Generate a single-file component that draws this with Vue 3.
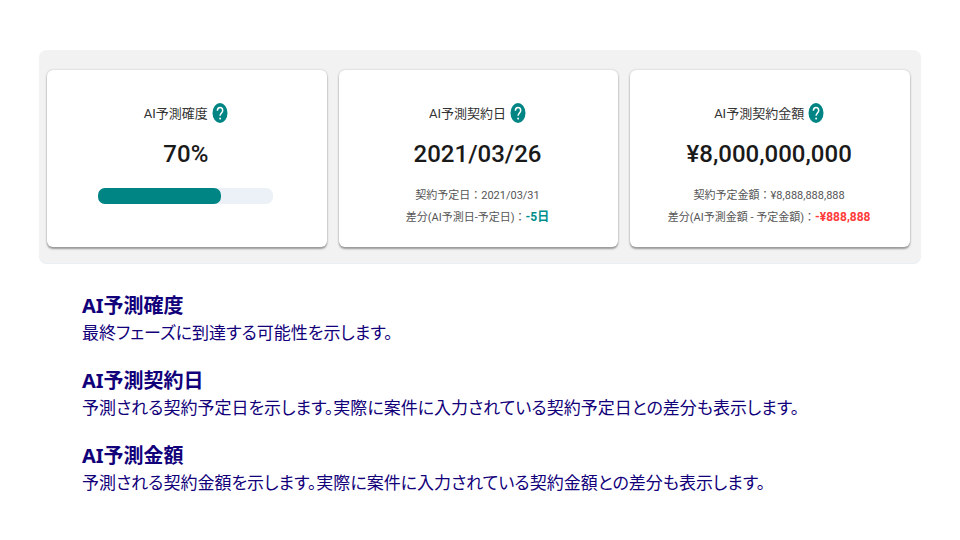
<script setup>
const confidence = 70

const cards = [
  { id: 'confidence', title: 'AI予測確度', value: '70%', progress: confidence },
  {
    id: 'date',
    title: 'AI予測契約日',
    value: '2021/03/26',
    planned: '契約予定日：2021/03/31',
    label: '差分(AI予測日-予定日)：',
    diff: '-5日',
    tone: 'positive',
  },
  {
    id: 'amount',
    title: 'AI予測契約金額',
    value: '¥8,000,000,000',
    planned: '契約予定金額：¥8,888,888,888',
    label: '差分(AI予測金額 - 予定金額)：',
    diff: '-¥888,888',
    tone: 'negative',
  },
]

const notes = [
  { title: 'AI予測確度', text: '最終フェーズに到達する可能性を示します。' },
  {
    title: 'AI予測契約日',
    text: '予測される契約予定日を示します。実際に案件に入力されている契約予定日との差分も表示します。',
  },
  {
    title: 'AI予測金額',
    text: '予測される契約金額を示します。実際に案件に入力されている契約金額との差分も表示します。',
  },
]
</script>

<template>
  <main class="page">
    <section class="panel">
      <article v-for="card in cards" :key="card.id" class="card">
        <div class="head">
          <h2 class="title">{{ card.title }}</h2>
          <button class="help" type="button" :aria-label="card.title">
            <svg viewBox="0 0 16 20" aria-hidden="true">
              <ellipse cx="8" cy="10" rx="7.5" ry="10" fill="#008584" />
              <path
                d="M5.4 7.8C5.4 5.6 6.4 4.4 8 4.4s2.7 1.1 2.7 3c0 2.3-2.6 2.8-2.6 5.3"
                fill="none"
                stroke="#fff"
                stroke-width="1.5"
              />
              <ellipse cx="8.1" cy="15.6" rx="0.9" ry="1.1" fill="#fff" />
            </svg>
          </button>
        </div>
        <p class="value">{{ card.value }}</p>
        <div
          v-if="card.progress"
          class="track"
          role="progressbar"
          :aria-label="card.title"
          :aria-valuenow="card.progress"
          aria-valuemin="0"
          aria-valuemax="100"
        >
          <div class="fill" :style="{ width: card.progress + '%' }"></div>
        </div>
        <div v-else class="details">
          <p>{{ card.planned }}</p>
          <p>{{ card.label }}<strong :class="card.tone">{{ card.diff }}</strong></p>
        </div>
      </article>
    </section>

    <section class="notes">
      <div v-for="note in notes" :key="note.title" class="note">
        <h3>{{ note.title }}</h3>
        <p>{{ note.text }}</p>
      </div>
    </section>
  </main>
</template>

<style>
body {
  margin: 0;
  background: #fff;
}
</style>

<style scoped>
.page {
  padding: 50px 39px 40px;
  font-family: "Noto Sans", "Noto Sans CJK JP", sans-serif;
}

h2,
h3,
p {
  margin: 0;
}

.panel {
  display: grid;
  grid-template-columns: repeat(3, 1fr);
  gap: 12px;
  padding: 20px 11px 16px 8px;
  border-radius: 8px;
  background: #f2f2f2;
  box-shadow: 0 1px 1px #e6edf2;
}

.card {
  display: flex;
  flex-direction: column;
  align-items: center;
  box-sizing: border-box;
  padding: 31px 10px 18px 8px;
  border-radius: 6px;
  background: #fff;
  box-shadow: 0 2px 2px #999, 0 0 2px #bbb;
  font-family: Roboto, "Noto Sans CJK JP", sans-serif;
  white-space: nowrap;
}

.head {
  display: flex;
  align-items: center;
  gap: 4px;
  height: 24px;
}

.title {
  padding-bottom: 2px;
  color: #333;
  font-size: 13px;
  font-weight: 400;
}

.help {
  width: 16px;
  height: 20px;
  padding: 0;
  border: 0;
  background: none;
}

.help svg {
  display: block;
  width: 16px;
  height: 20px;
}

.value {
  margin-top: 12px;
  color: #1a1a1a;
  font-size: 24px;
  font-weight: 500;
  line-height: 34px;
}

.track {
  width: 175px;
  height: 16px;
  margin-top: 17px;
  border-radius: 7px;
  background: #ebf1f6;
}

.fill {
  height: 16px;
  border-radius: 7px;
  background: #008584;
}

.details {
  margin-top: 14px;
  color: #555;
  font-size: 11px;
  line-height: 22px;
  text-align: center;
}

.details strong {
  font-size: 12px;
  line-height: 20px;
}

.positive {
  color: #008f8c;
}

.negative {
  color: #ff3b3b;
}

.notes {
  display: grid;
  gap: 24px;
  padding: 30px 43px 0;
  color: #12007a;
}

.note h3 {
  font-size: 20px;
  font-weight: 700;
  line-height: 26px;
}

.note p {
  font-family: "Noto Sans CJK JP", sans-serif;
  font-size: 17px;
  font-feature-settings: "palt";
  line-height: 25px;
}
</style>
